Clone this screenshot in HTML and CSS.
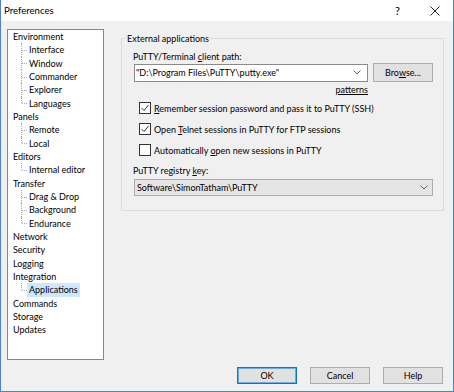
FILE: index.html
```html
<!DOCTYPE html>
<html>
<head>
<meta charset="utf-8">
<title>Preferences</title>
<link rel="stylesheet" href="styles.css">
</head>
<body>
<div class="window">
  <div class="titlebar">
    <span class="title">Preferences</span>
    <div class="title-buttons">
      <span class="tbtn">?</span>
      <span class="tbtn"><svg width="10" height="10" viewBox="0 0 10 10"><path d="M0.5 0.5 L9.5 9.5 M9.5 0.5 L0.5 9.5" stroke="#222" stroke-width="1" fill="none"/></svg></span>
    </div>
  </div>
  <div class="main">
    <nav class="tree">
      <ul class="roots">
        <li><span class="label">Environment</span>
          <ul class="children">
            <li><span class="label">Interface</span></li>
            <li><span class="label">Window</span></li>
            <li><span class="label">Commander</span></li>
            <li><span class="label">Explorer</span></li>
            <li><span class="label">Languages</span></li>
          </ul>
        </li>
        <li><span class="label">Panels</span>
          <ul class="children">
            <li><span class="label">Remote</span></li>
            <li><span class="label">Local</span></li>
          </ul>
        </li>
        <li><span class="label">Editors</span>
          <ul class="children">
            <li><span class="label">Internal editor</span></li>
          </ul>
        </li>
        <li><span class="label">Transfer</span>
          <ul class="children">
            <li><span class="label">Drag &amp; Drop</span></li>
            <li><span class="label">Background</span></li>
            <li><span class="label">Endurance</span></li>
          </ul>
        </li>
        <li><span class="label">Network</span></li>
        <li><span class="label">Security</span></li>
        <li><span class="label">Logging</span></li>
        <li><span class="label">Integration</span>
          <ul class="children">
            <li><span class="label selected">Applications</span></li>
          </ul>
        </li>
        <li><span class="label">Commands</span></li>
        <li><span class="label">Storage</span></li>
        <li><span class="label">Updates</span></li>
      </ul>
    </nav>
    <fieldset class="group">
      <legend>External applications</legend>
      <div class="field-label first">PuTTY/Terminal <u>c</u>lient path:</div>
      <div class="path-row">
        <div class="combo editable">
          <span class="combo-text">"D:\Program Files\PuTTY\putty.exe"</span>
          <svg class="chev" width="8" height="5" viewBox="0 0 8 5"><path d="M0.5 0.5 L4 4 L7.5 0.5" stroke="#606060" fill="none"/></svg>
        </div>
        <button class="btn browse">Bro<u>w</u>se...</button>
      </div>
      <div class="patterns-row"><span class="link">patterns</span></div>
      <label class="check first-check">
        <svg width="12" height="12" viewBox="0 0 12 12"><rect x="0.5" y="0.5" width="11" height="11" fill="#fff" stroke="#333"/><path d="M2.5 6 L5 8.5 L9.5 3" stroke="#333" fill="none"/></svg>
        <span><u>R</u>emember session password and pass it to PuTTY (SSH)</span>
      </label>
      <label class="check">
        <svg width="12" height="12" viewBox="0 0 12 12"><rect x="0.5" y="0.5" width="11" height="11" fill="#fff" stroke="#333"/><path d="M2.5 6 L5 8.5 L9.5 3" stroke="#333" fill="none"/></svg>
        <span>Open <u>T</u>elnet sessions in PuTTY for FTP sessions</span>
      </label>
      <label class="check">
        <svg width="12" height="12" viewBox="0 0 12 12"><rect x="0.5" y="0.5" width="11" height="11" fill="#fff" stroke="#333"/></svg>
        <span>Automatically <u>o</u>pen new sessions in PuTTY</span>
      </label>
      <div class="field-label registry">PuTTY registry <u>k</u>ey:</div>
      <div class="combo dropdown">
        <span class="combo-text">Software\SimonTatham\PuTTY</span>
        <svg class="chev" width="8" height="5" viewBox="0 0 8 5"><path d="M0.5 0.5 L4 4 L7.5 0.5" stroke="#606060" fill="none"/></svg>
      </div>
    </fieldset>
  </div>
  <div class="buttons">
    <button class="btn default">OK</button>
    <button class="btn">Cancel</button>
    <button class="btn">Help</button>
  </div>
</div>
</body>
</html>
```

FILE: styles.css
```css
html, body {
  margin: 0;
  padding: 0;
}
body {
  width: 454px;
  height: 392px;
  background: #f0f0f0;
  font-family: Lato, "Noto Sans", sans-serif;
  font-size: 9px;
  color: #000;
}
.window {
  box-sizing: border-box;
  width: 454px;
  height: 392px;
  border: 1px solid #4f80d6;
  border-top: none;
  display: flex;
  flex-direction: column;
  background: #f0f0f0;
}
.titlebar {
  height: 21px;
  background: #fff;
  display: flex;
  align-items: center;
  justify-content: space-between;
  flex: none;
}
.title {
  padding-left: 3px;
  line-height: 21px;
  font-size: 9.6px;
}
.title-buttons {
  display: flex;
  height: 21px;
}
.tbtn {
  width: 37px;
  height: 21px;
  display: flex;
  align-items: center;
  justify-content: center;
  font-size: 11px;
}
.main {
  display: flex;
  align-items: flex-start;
  padding: 8px 0 0 6px;
  flex: none;
}
.tree {
  box-sizing: border-box;
  width: 97px;
  height: 331px;
  border: 1px solid #828790;
  background: #fff;
  flex: none;
}
.tree ul {
  list-style: none;
  margin: 0;
  padding: 0;
}
.roots > li {
  padding-left: 3px;
}
.label {
  display: inline-block;
  height: 13.33px;
  line-height: 13.33px;
  padding: 0 2px;
  white-space: nowrap;
}
.label.selected {
  background: #cce8ff;
}
.children > li {
  position: relative;
  padding-left: 16px;
}
.children > li::before {
  content: "";
  position: absolute;
  left: 10px;
  top: 0;
  bottom: 0;
  border-left: 1px dotted #a8a8a8;
}
.children > li:last-child::before {
  bottom: 50%;
}
.children > li::after {
  content: "";
  position: absolute;
  left: 11px;
  top: 50%;
  width: 5px;
  border-top: 1px dotted #a8a8a8;
}
.group {
  box-sizing: border-box;
  width: 323px;
  min-width: 0;
  margin: 3px 0 0 17px;
  padding: 0 9px 14px 11px;
  border: 1px solid #dcdcdc;
}
.group legend {
  padding: 0 1px;
  margin-left: -7px;
  line-height: 13px;
}
.field-label {
  line-height: 13px;
}
.field-label.first {
  margin-top: 5px;
}
.field-label.registry {
  margin-top: 3px;
}
u {
  text-decoration-thickness: 1px;
  text-underline-offset: 1px;
}
.path-row {
  display: flex;
  align-items: center;
  gap: 5px;
  height: 19px;
}
.combo {
  box-sizing: border-box;
  display: flex;
  align-items: center;
  justify-content: space-between;
  margin-left: 1px;
}
.combo.editable {
  width: 234px;
  height: 18px;
  border: 1px solid #8a8a8a;
  background: #fff;
  padding: 0 6px 0 1px;
}
.combo.dropdown {
  width: 299px;
  height: 17px;
  margin-top: 2.5px;
  border: 1px solid #adadad;
  background: #e5e5e5;
  padding: 0 4px 0 2px;
}
.btn {
  box-sizing: border-box;
  width: 60px;
  height: 17px;
  padding: 0;
  border: 1px solid #adadad;
  background: #e1e1e1;
  font: inherit;
  color: #000;
}
.btn.browse {
  height: 19px;
}
.btn.default {
  border-color: #0078d7;
  box-shadow: inset 0 0 0 1px #6aaae6;
}
.patterns-row {
  width: 235px;
  text-align: right;
  line-height: 13px;
  margin-top: 1px;
}
.link {
  text-decoration: underline;
  text-decoration-thickness: 1px;
  text-underline-offset: 1px;
}
.check {
  display: flex;
  align-items: center;
  gap: 3px;
  height: 21px;
  padding-left: 6px;
}
.check svg {
  flex: none;
}
.first-check {
  margin-top: 1.5px;
}
.buttons {
  display: flex;
  justify-content: flex-end;
  gap: 13px;
  margin-top: 7px;
  padding-right: 10px;
}
```
